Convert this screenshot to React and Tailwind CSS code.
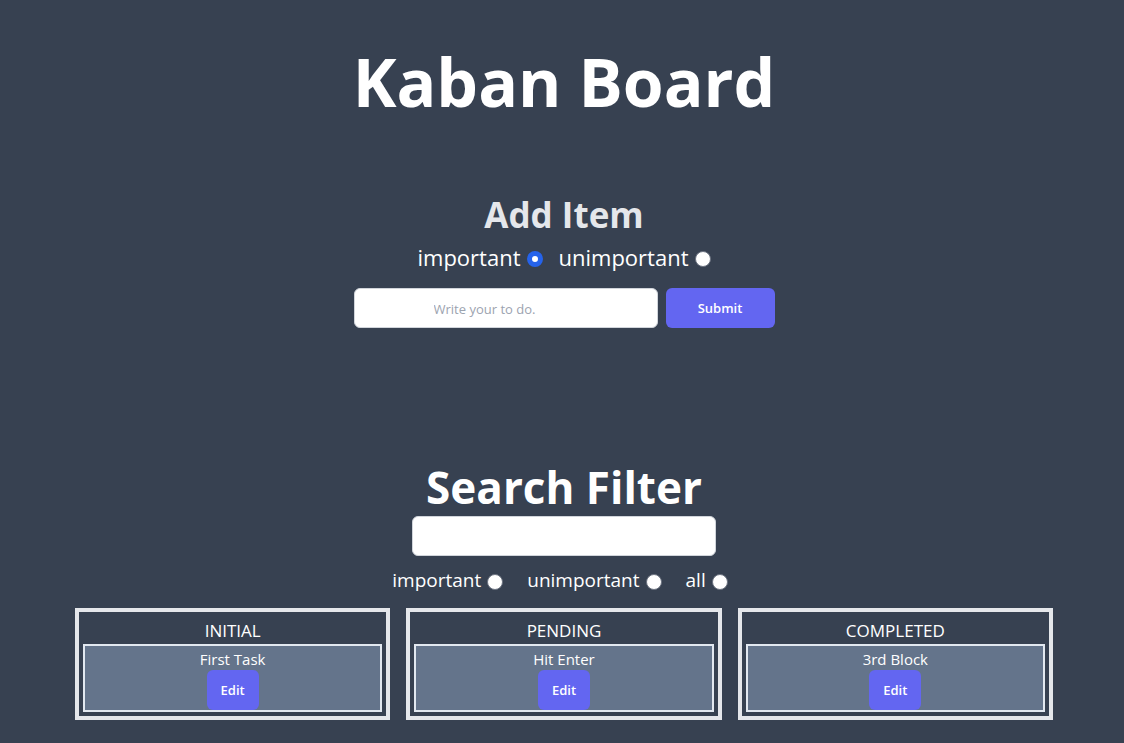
import { useState } from "react";

const COLUMNS = [
  { title: "INITIAL", tasks: ["First Task"] },
  { title: "PENDING", tasks: ["Hit Enter"] },
  { title: "COMPLETED", tasks: ["3rd Block"] },
];

function Radio({ label, ...props }) {
  return (
    <label className="flex items-center gap-1.5">
      {label}
      <input
        type="radio"
        className="mt-1 size-4 shrink-0 appearance-none rounded-full border border-[#6b7280] bg-white checked:border-[5px] checked:border-[#2563eb]"
        {...props}
      />
    </label>
  );
}

function Column({ title, tasks }) {
  return (
    <section className="border-4 border-[#e5e7eb] p-1 text-center">
      <h3 className="pt-0.5 text-[17px] leading-[26px]">{title}</h3>
      {tasks.map((task) => (
        <div key={task} className="flex flex-col items-center border-2 border-[#e2e8f0] bg-[#64748b]">
          <p className="pt-0.5 text-[15px] leading-[22px]">{task}</p>
          <button type="button" className="h-10 w-[52px] rounded-md bg-[#6366f1] pt-0.5 text-[13px] font-semibold">
            Edit
          </button>
        </div>
      ))}
    </section>
  );
}

export default function App() {
  const [priority, setPriority] = useState("important");
  const [filter, setFilter] = useState("");
  const [todo, setTodo] = useState("");
  const [query, setQuery] = useState("");

  return (
    <main className="min-h-screen bg-[#374151] pt-[45px] pr-[71px] pb-6 pl-[75px] font-['Open_Sans','Noto_Sans',sans-serif] text-white">
      <h1 className="text-center text-[66px] leading-[72px] font-bold">Kaban Board</h1>

      <form className="mt-[78px] flex flex-col items-center" onSubmit={(e) => e.preventDefault()}>
        <h2 className="text-[35px] leading-10 font-bold text-[#e5e7eb]">Add Item</h2>
        <div className="mt-1.5 flex gap-4 text-[22px] leading-8">
          {["important", "unimportant"].map((p) => (
            <Radio key={p} label={p} name="priority" checked={priority === p} onChange={() => setPriority(p)} />
          ))}
        </div>
        <div className="mt-[15px] flex gap-2">
          <input
            type="text"
            aria-label="To do"
            placeholder="Write your to do."
            value={todo}
            onChange={(e) => setTodo(e.target.value)}
            className="h-10 w-[304px] rounded-md border border-[#d1d5db] bg-white pt-0.5 pl-[79px] text-[13px] text-[#374151] placeholder:text-[#9ca3af]"
          />
          <button type="submit" className="h-10 w-[109px] rounded-md bg-[#6366f1] pt-0.5 text-[13px] font-semibold">
            Submit
          </button>
        </div>
      </form>

      <section className="mt-[135px] flex flex-col items-center">
        <h2 className="text-[44px] leading-[48px] font-bold">Search Filter</h2>
        <input
          type="text"
          aria-label="Search"
          value={query}
          onChange={(e) => setQuery(e.target.value)}
          className="mt-[5px] h-10 w-[304px] rounded-md border border-[#d1d5db] bg-white px-4 text-[13px] text-[#374151]"
        />
        <div className="mt-2.5 mr-2 flex gap-6 text-[19px] leading-7">
          {["important", "unimportant", "all"].map((f) => (
            <Radio key={f} label={f} name="filter" checked={filter === f} onChange={() => setFilter(f)} />
          ))}
        </div>
      </section>

      <div className="mt-3.5 grid grid-cols-3 gap-4">
        {COLUMNS.map((column) => (
          <Column key={column.title} {...column} />
        ))}
      </div>
    </main>
  );
}
